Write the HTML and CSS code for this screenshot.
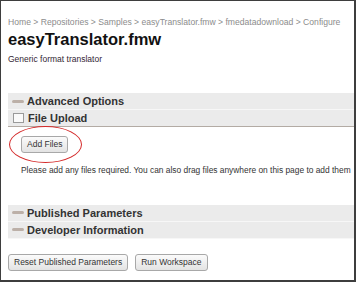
FILE: index.html
```html
<!DOCTYPE html>
<html lang="en">
<head>
    <meta charset="UTF-8">
    <title>easyTranslator.fmw - Configure</title>
    <link rel="stylesheet" href="styles.css">
</head>
<body>
    <div class="frame">
        <div class="page">
            <p class="crumbs">Home &gt; Repositories &gt; Samples &gt; easyTranslator.fmw &gt; fmedatadownload &gt; Configure</p>
            <h1>easyTranslator.fmw</h1>
            <p class="subtitle">Generic format translator</p>

            <!-- Collapsible sections -->
            <div class="sections">
                <div class="bar"><span class="icon-minus"></span>Advanced Options</div>
                <div class="bar bar-open"><span class="icon-box"></span>File Upload</div>
            </div>

            <div class="upload">
                <button class="btn">Add Files</button>
                <p class="hint">Please add any files required. You can also drag files anywhere on this page to add them</p>
            </div>

            <div class="sections">
                <div class="bar"><span class="icon-minus"></span>Published Parameters</div>
                <div class="bar"><span class="icon-minus"></span>Developer Information</div>
            </div>

            <div class="actions">
                <button class="btn">Reset Published Parameters</button>
                <button class="btn">Run Workspace</button>
            </div>
        </div>

        <!-- red annotation around the Add Files button -->
        <div class="callout"></div>
    </div>
</body>
</html>
```

FILE: styles.css
```css
/* Global */
body {
    margin: 0;
    background: #ffffff;
    font-family: 'Liberation Sans', Arial, sans-serif;
    color: #333;
}

/* Screenshot frame */
.frame {
    position: relative;
    width: 356px;
    height: 282px;
    box-sizing: border-box;
    border: 1px solid #3e3e3e;
    border-right-width: 2px;
    border-bottom-width: 2px;
    overflow: hidden;
    background: #fff;
}

.page {
    width: 420px;
    padding: 16px 0 0 7px;
}

/* Header */
.crumbs {
    margin: 0;
    font-size: 8.6px;
    line-height: 11px;
    color: #8c8c8c;
    white-space: nowrap;
}

h1 {
    margin: 1px 0 0;
    font-size: 16.5px;
    line-height: 20px;
    font-weight: bold;
    color: #111;
}

.subtitle {
    margin: 5px 0 0;
    font-size: 8.5px;
    line-height: 11px;
    color: #332633;
}

/* Section bars */
.sections {
    margin-top: 28px;
}

.bar {
    display: flex;
    align-items: center;
    gap: 2px;
    height: 16px;
    padding-left: 4px;
    background: #ebebeb;
    border-bottom: 1px solid #f7f7f7;
    font-size: 11px;
    font-weight: bold;
    color: #333;
}

.bar-open {
    border-bottom-color: #b3aba4;
}

.icon-minus {
    width: 12px;
    height: 3px;
    border-radius: 2px;
    background: #bcb0a8;
    margin-right: 1px;
}

.icon-box {
    width: 9px;
    height: 8px;
    margin: 0 2px 0 1px;
    border: 1px solid #9a9a9a;
    background: #fafafa;
}

/* Upload area */
.upload {
    padding: 6px 0 0 13px;
}

.hint {
    margin: 12px 0 0;
    font-size: 8.4px;
    line-height: 11px;
    color: #333;
    white-space: nowrap;
}

.upload + .sections {
    margin-top: 29px;
}

/* Buttons */
.btn {
    height: 17px;
    padding: 0 5px;
    border: 1px solid #a8a8a8;
    border-radius: 3px;
    background: linear-gradient(#fbfbfb, #e3e3e3);
    font-family: 'Liberation Sans', Arial, sans-serif;
    font-size: 8.5px;
    color: #333;
}

.actions {
    display: flex;
    gap: 7px;
    margin-top: 15px;
}

/* Annotation */
.callout {
    position: absolute;
    left: 8px;
    top: 125px;
    width: 71px;
    height: 35px;
    border: 1.5px solid #d42a2a;
    border-radius: 50%;
}
```
